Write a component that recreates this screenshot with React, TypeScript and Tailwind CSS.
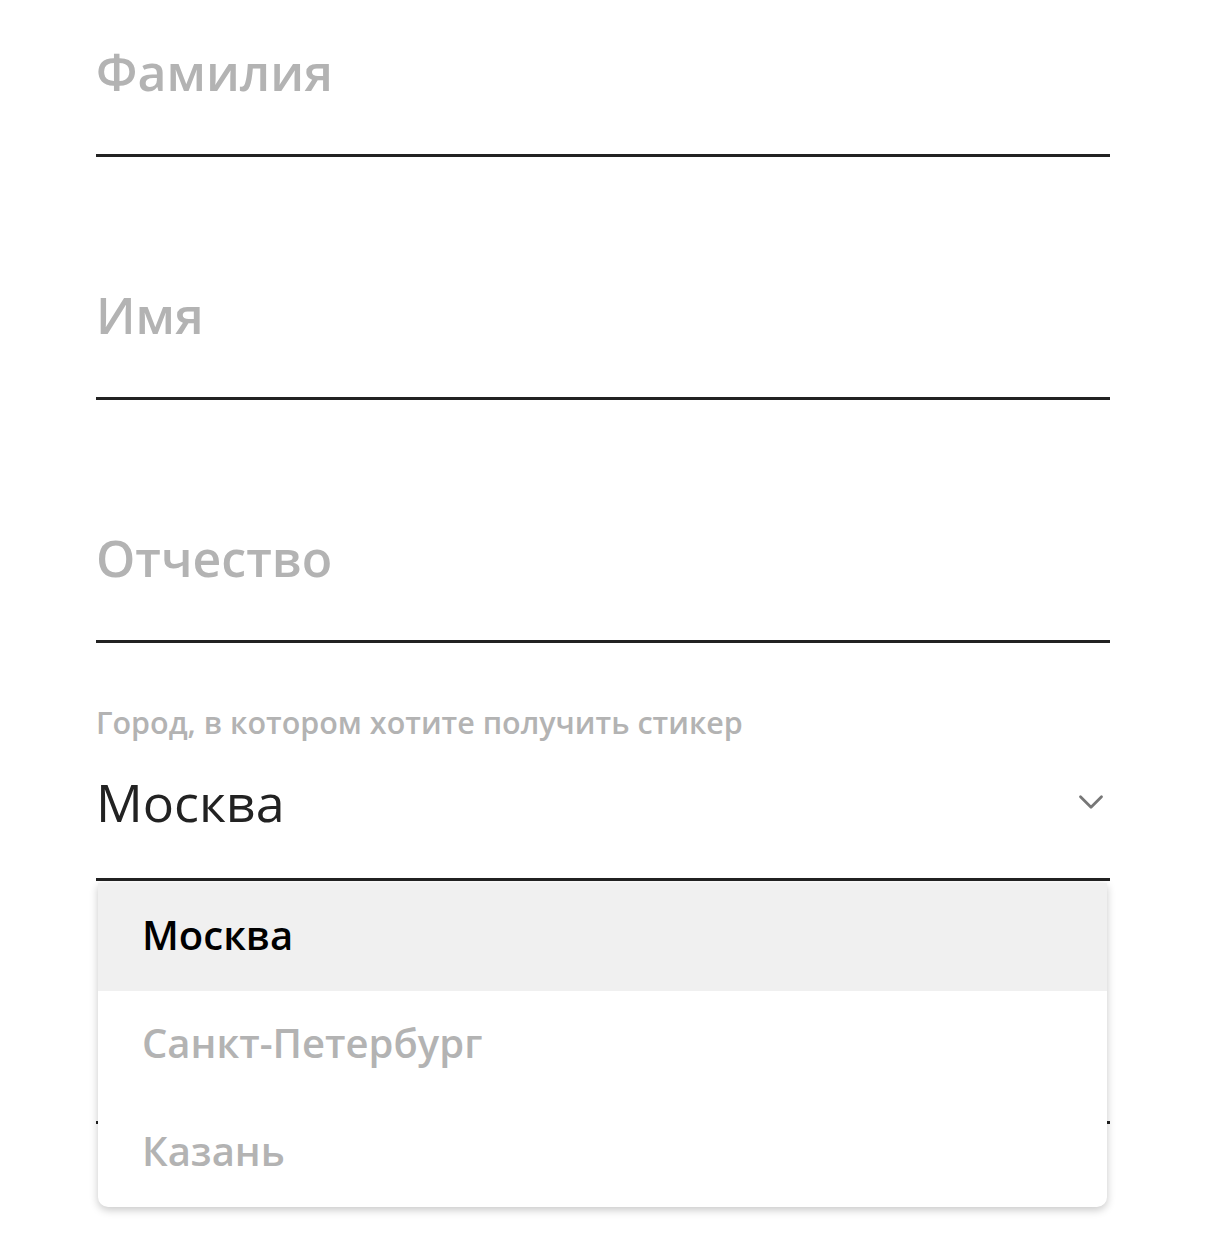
import { ChevronDown } from 'lucide-react'

const font = { fontFamily: '"Open Sans", "Noto Sans", sans-serif' }

function TextField({ placeholder, first }: { placeholder: string; first?: boolean }) {
  return (
    <div
      className={`flex flex-col justify-end border-b-[3px] border-[#222] pb-[52px] ${first ? 'h-[157px]' : 'h-[243px]'}`}
    >
      <div className="text-[50px] font-semibold leading-[60px] text-[#b3b3b3]">{placeholder}</div>
    </div>
  )
}

const cities = ['Москва', 'Санкт-Петербург', 'Казань']

export default function App() {
  return (
    <div className="min-h-[1243px] bg-white px-[96px]" style={font}>
      <div className="w-[1014px]">
        <TextField placeholder="Фамилия" first />
        <TextField placeholder="Имя" />
        <TextField placeholder="Отчество" />

        <div className="relative">
          <div className="flex h-[238px] flex-col justify-end border-b-[3px] border-[#222] pb-[41px]">
            <div className="text-[30.5px] font-semibold leading-[40px] text-[#b3b3b3]">
              Город, в котором хотите получить стикер
            </div>
            <div className="mt-[25px] flex items-center justify-between">
              <span className="text-[52px] leading-[70px] text-[#222]">Москва</span>
              <ChevronDown className="-mr-[2px] h-[42px] w-[42px] text-[#777]" strokeWidth={1.6} />
            </div>
          </div>

          <ul className="absolute left-[2px] right-[3px] top-full z-10 mt-[2px] overflow-hidden rounded-b-[10px] bg-white shadow-[0_3px_8px_rgba(0,0,0,0.22)]">
            {cities.map((city, i) => (
              <li
                key={city}
                className={`flex h-[108px] items-center px-[44px] text-[40px] font-semibold ${
                  i === 0 ? 'bg-[#f0f0f0] text-black' : 'text-[#b3b3b3]'
                }`}
              >
                <span className="-mt-[4px]">{city}</span>
              </li>
            ))}
          </ul>
        </div>

        <div className="h-[243px] border-b-[3px] border-[#222]" />
      </div>
    </div>
  )
}
